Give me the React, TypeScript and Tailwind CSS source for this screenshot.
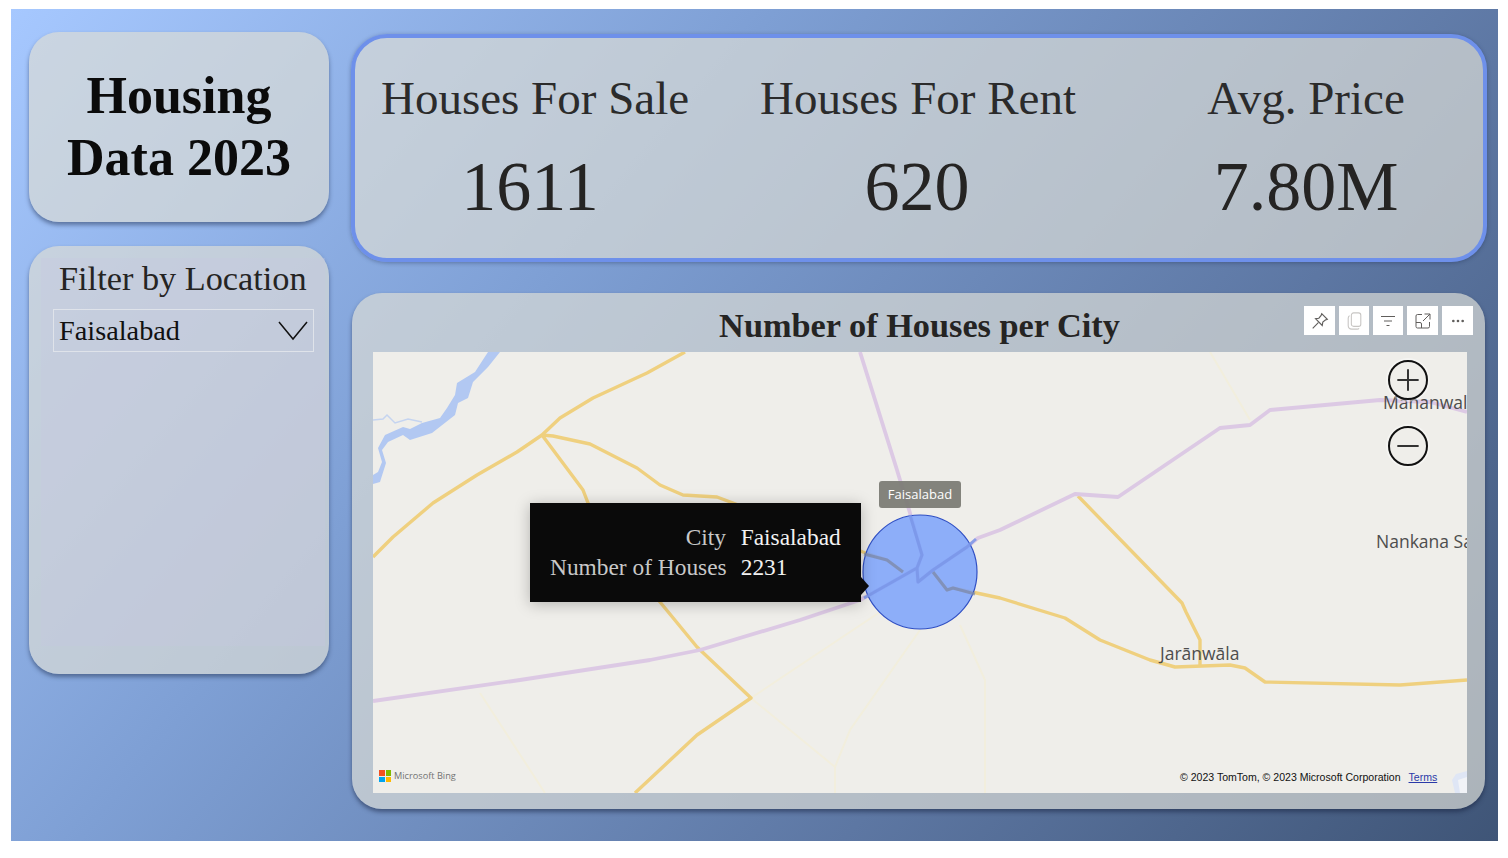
import React from 'react';
import { Ellipsis, Minus, Plus } from 'lucide-react';

const serif = 'font-["Liberation_Serif",serif]';

const KPIS = [
  { label: 'Houses For Sale', value: '1611', valueClass: 'mr-[10px]' },
  { label: 'Houses For Rent', value: '620', valueClass: 'mr-[2px]' },
  { label: 'Avg. Price', value: '7.80M', valueClass: '' },
];

const YELLOW_ROADS = [
  'M373 557 L393 537 L433 503 L477 475 L517 452 L542 435 L560 418 L593 398 L647 373 L685 352',
  'M542 435 L553 436 L590 444 L637 468 L660 485 L683 495 L717 497 L733 503 L790 525 L863 552 L887 560 L903 572',
  'M542 435 L583 490 L588 503 L660 602 L697 647 L751 698 L697 735 L635 793',
  'M933 572 L947 590 L953 588 L1000 598 L1065 618 L1100 640 L1150 660 L1175 667 L1230 665 L1245 668 L1265 682 L1400 685 L1467 680',
  'M1078 496 L1182 603 L1186 612 L1200 640 L1200 665',
];

const PURPLE_ROADS = [
  'M373 701 L520 680 L650 660 L700 650 L800 620 L860 600 L887 585 L917 568 L922 555 L910 513 L897 470 L860 352',
  'M917 568 L918 582 L933 570 L967 547 L978 538 L1000 530 L1075 494 L1118 497 L1220 428 L1250 425 L1270 410 L1380 400 L1430 402 L1467 412',
];

const FAINT_ROADS = [
  'M960 625 L985 680 L985 793',
  'M880 612 L751 698 L835 767 L835 793',
  'M920 630 L850 730 L835 767',
  'M480 693 L545 793',
  'M1210 352 L1250 420',
];

const MapDrawing = () => (
  <svg viewBox="373 352 1094 441" className="absolute inset-0 h-full w-full">
    <path
      d="M488 352 L500 352 L488 367 L473 382 L468 398 L458 403 L455 415 L432 433 L410 440 L403 435 L388 442 L382 450 L386 463 L380 482 L373 484 L373 475 L378 472 L382 462 L378 448 L385 435 L403 427 L410 429 L422 423 L440 418 L447 408 L455 395 L457 383 L475 372 Z"
      fill="#b2c8f2"
    />
    <path d="M373 420 L383 419 L387 415 L395 423 L408 419 L422 422" fill="none" stroke="#c5d4f0" strokeWidth="1.5" />
    {FAINT_ROADS.map((d) => (
      <path key={d} d={d} fill="none" stroke="#f2eedd" strokeWidth="2" />
    ))}
    {YELLOW_ROADS.map((d) => (
      <path key={d} d={d} fill="none" stroke="#efd07f" strokeWidth="3.4" strokeLinejoin="round" />
    ))}
    {PURPLE_ROADS.map((d) => (
      <path key={d} d={d} fill="none" stroke="#dcc9e4" strokeWidth="3.8" strokeLinejoin="round" />
    ))}
    <circle cx="920" cy="572" r="57" fill="#7ba2fb" fillOpacity="0.85" stroke="#2f4fc4" strokeWidth="1.2" />
    {/* roads showing through the bubble */}
    <path d="M864 554 L887 560 L903 572 M933 572 L947 590 L953 588 L975 594" fill="none" stroke="#7d8aa8" strokeWidth="3" strokeLinejoin="round" strokeOpacity="0.75" />
    <path d="M864 598 L887 585 L917 568 L922 555 L910 515 M917 568 L918 582 L933 570 L967 547 L976 539" fill="none" stroke="#7a96e8" strokeWidth="3" strokeLinejoin="round" strokeOpacity="0.85" />
    {/* compass stub in the corner */}
    <path d="M1467 771 L1456 774 L1452 780 L1455 793 L1467 793 Z" fill="#dfe6f5" />
    <path d="M1458 780 L1467 777 L1467 793 L1460 793 Z" fill="#f1f3f7" />
  </svg>
);

const HeaderButton = ({ children, className }: { children: React.ReactNode; className: string }) => (
  <div className={`flex h-[29px] items-center justify-center bg-white ${className}`}>{children}</div>
);

const VisualHeaderIcons = () => (
  <div className="absolute right-[12px] top-[13px] flex gap-[4px] text-[#605e5c]">
    <HeaderButton className="w-[31px]">
      <svg viewBox="0 0 16 16" className="h-[18px] w-[18px]" fill="none" stroke="currentColor" strokeWidth="1">
        <path d="M9.5 1.5 L14.5 6.5 L13 7 L10.5 9 L10 12 L4 6 L7 5.5 L9 3 Z M6.5 9.5 L1.5 14.5" />
      </svg>
    </HeaderButton>
    <HeaderButton className="w-[30px]">
      <svg viewBox="0 0 16 20" className="h-[18px] w-[15px]" fill="none" stroke="#c8c6c4" strokeWidth="1.2">
        <rect x="4.500" y="1" width="10.500" height="15" rx="2.500" />
        <path d="M2.500 4 Q1 5 1 7 V15 Q1 19 5 19 H11 Q12.500 19 13 18" />
      </svg>
    </HeaderButton>
    <HeaderButton className="w-[30px]">
      <svg viewBox="0 0 16 16" className="h-[16px] w-[16px]" fill="none" stroke="currentColor" strokeWidth="1">
        <path d="M1 3.5 H15 M4 8 H12 M6.5 12.5 H9.5" />
      </svg>
    </HeaderButton>
    <HeaderButton className="w-[31px]">
      <svg viewBox="0 0 16 16" className="h-[16px] w-[16px]" fill="none" stroke="currentColor" strokeWidth="1">
        <path d="M7 1.5 H2.5 Q1 1.5 1 3 V13.5 Q1 15 2.5 15 H13 Q14.500 15 14.500 13.500 V9 M9.500 1 H15 V6.500 M15 1 L8 8 M1 9.500 H5 Q6.500 9.500 6.500 11 V15" />
      </svg>
    </HeaderButton>
    <HeaderButton className="w-[31px]">
      <Ellipsis size={16} strokeWidth={2} />
    </HeaderButton>
  </div>
);

const ZoomButton = ({ children }: { children: React.ReactNode }) => (
  <div className="flex h-[40px] w-[40px] items-center justify-center rounded-full border-2 border-[#111] text-[#333] shadow-[0_0_0_2px_rgba(255,255,255,0.4)]">
    {children}
  </div>
);

const MapLabel = ({ text, className }: { text: string; className: string }) => (
  <span className={`absolute whitespace-nowrap font-["Open_Sans",sans-serif] text-[17.500px] leading-none text-[#4d4d4d] ${className}`}>
    {text}
  </span>
);

const Tooltip = () => (
  <div className="absolute left-[157px] top-[151px] h-[99px] w-[331px] bg-[#0a0a0a] shadow-[0_2px_14px_rgba(0,0,0,0.25)]">
    <div className={`grid grid-cols-[auto_auto] justify-start gap-x-[14px] pl-[20px] pt-[19px] text-[23.400px] leading-[30px] ${serif}`}>
      <span className="w-[176px] text-right text-[#c8c8c8]">City</span>
      <span className="text-[#f2f2f2]">Faisalabad</span>
      <span className="whitespace-nowrap text-right text-[#c8c8c8]">Number of Houses</span>
      <span className="text-[#f2f2f2]">2231</span>
    </div>
    <div className="absolute left-full top-[74px] h-0 w-0 border-y-[9px] border-l-[8px] border-y-transparent border-l-[#0a0a0a]" />
  </div>
);

export default function App() {
  return (
    <div className="h-[858px] w-[1508px] overflow-hidden bg-white pl-[11px] pt-[9px]">
      <div className="flex h-[832px] w-[1487px] gap-[22px] bg-[linear-gradient(130deg,#a6c8ff_0%,#7e9fd4_35%,#5d77a3_70%,#3f5577_100%)] pl-[18px] pr-[11px]">
        {/* Left column */}
        <div className="flex w-[300px] flex-col gap-[24px] pt-[23px]">
          <div className="flex h-[190px] flex-col items-center justify-center rounded-[30px] bg-[#dadcd6]/[.7] shadow-[0_3px_4px_rgba(30,45,80,0.5)]">
            <h1 className={`text-center text-[52px] font-bold leading-[62px] text-[#0b0b0b] ${serif}`}>
              Housing
              <br />
              Data 2023
            </h1>
          </div>
          <div className="h-[428px] rounded-[30px] bg-[#dadcd6]/[.7] pl-[12px] pt-[12px] shadow-[0_3px_4px_rgba(30,45,80,0.5)]">
            <div className={`h-[388px] w-[284px] bg-[#c6c8e0]/30 ${serif}`}>
              <div className="pl-[18px] text-[34.300px] leading-[40px] text-[#252423]">Filter by Location</div>
              <div className="ml-[12px] mt-[11px] flex h-[43px] w-[261px] items-center justify-between border border-[#dfe3ea] pl-[5px] pr-[5px] text-[28.300px] text-[#111]">
                <span className="pt-[2px]">Faisalabad</span>
                <svg viewBox="0 0 30 20" className="h-[20px] w-[30px]" fill="none" stroke="#111" strokeWidth="1.5">
                  <path d="M1 1 L15 18 L29 1" />
                </svg>
              </div>
            </div>
          </div>
        </div>

        {/* Right column */}
        <div className="flex w-[1136px] flex-col gap-[31px] pt-[25px]">
          <div className="grid h-[228px] grid-cols-[324px_442px_334px] rounded-[36px] border-[4px] border-[#6e90ea] bg-[#dadcd6]/[.7] pl-[18px] pt-[30px] shadow-[0_1px_4px_rgba(30,45,80,0.4)]">
            {KPIS.map((kpi) => (
              <div key={kpi.label} className={`flex flex-col items-center text-[#2b2b2b] ${serif}`}>
                <div className="whitespace-nowrap text-[47px] leading-[60px]">{kpi.label}</div>
                <div className={`mt-[19px] text-[70px] leading-[80px] text-[#252423] ${kpi.valueClass}`}>{kpi.value}</div>
              </div>
            ))}
          </div>

          <div className="relative ml-[1px] h-[516px] w-[1133px] rounded-[30px] bg-[#dadcd6]/[.7] px-[21px] shadow-[0_3px_4px_rgba(20,30,60,0.5)]">
            <VisualHeaderIcons />
            <div className={`flex h-[59px] items-center justify-center pl-[2px] pt-[6px] text-[34.300px] font-bold leading-none text-[#252423] ${serif}`}>
              Number of Houses per City
            </div>
            <div className="relative h-[441px] w-[1094px] overflow-hidden bg-[#efeeea]">
              <MapDrawing />
              <MapLabel text="Mananwal" className="left-[1010px] top-[42px]" />
              <MapLabel text="Nankana Sahib" className="left-[1003px] top-[181px]" />
              <MapLabel text="Jarānwāla" className="left-[787px] top-[293px]" />

              <div className="absolute left-[506px] top-[129px] flex h-[27px] w-[82px] items-center justify-center rounded-[3px] bg-[#7c7c76]/95 font-['Open_Sans',sans-serif] text-[13px] text-white">
                Faisalabad
              </div>
              <Tooltip />

              <div className="absolute left-[1015px] top-[8px] flex flex-col gap-[26px]">
                <ZoomButton>
                  <Plus size={34} strokeWidth={1.400} />
                </ZoomButton>
                <ZoomButton>
                  <Minus size={34} strokeWidth={1.400} />
                </ZoomButton>
              </div>

              <div className="absolute bottom-[11px] left-[6px] flex items-center gap-[3px]">
                <div className="grid h-[12px] w-[12px] grid-cols-2 gap-px">
                  <div className="bg-[#f25022]" />
                  <div className="bg-[#7fba00]" />
                  <div className="bg-[#00a4ef]" />
                  <div className="bg-[#ffb900]" />
                </div>
                <span className="font-['Open_Sans',sans-serif] text-[9.200px] leading-none text-[#737373]">Microsoft Bing</span>
              </div>

              <div className="absolute bottom-[10px] left-[807px] flex gap-[8px] whitespace-nowrap font-['Liberation_Sans',sans-serif] text-[10.550px] leading-none text-[#111]">
                <span>© 2023 TomTom, © 2023 Microsoft Corporation</span>
                <span className="text-[#2a3aa8] underline">Terms</span>
              </div>
            </div>
          </div>
        </div>
      </div>
    </div>
  );
}
